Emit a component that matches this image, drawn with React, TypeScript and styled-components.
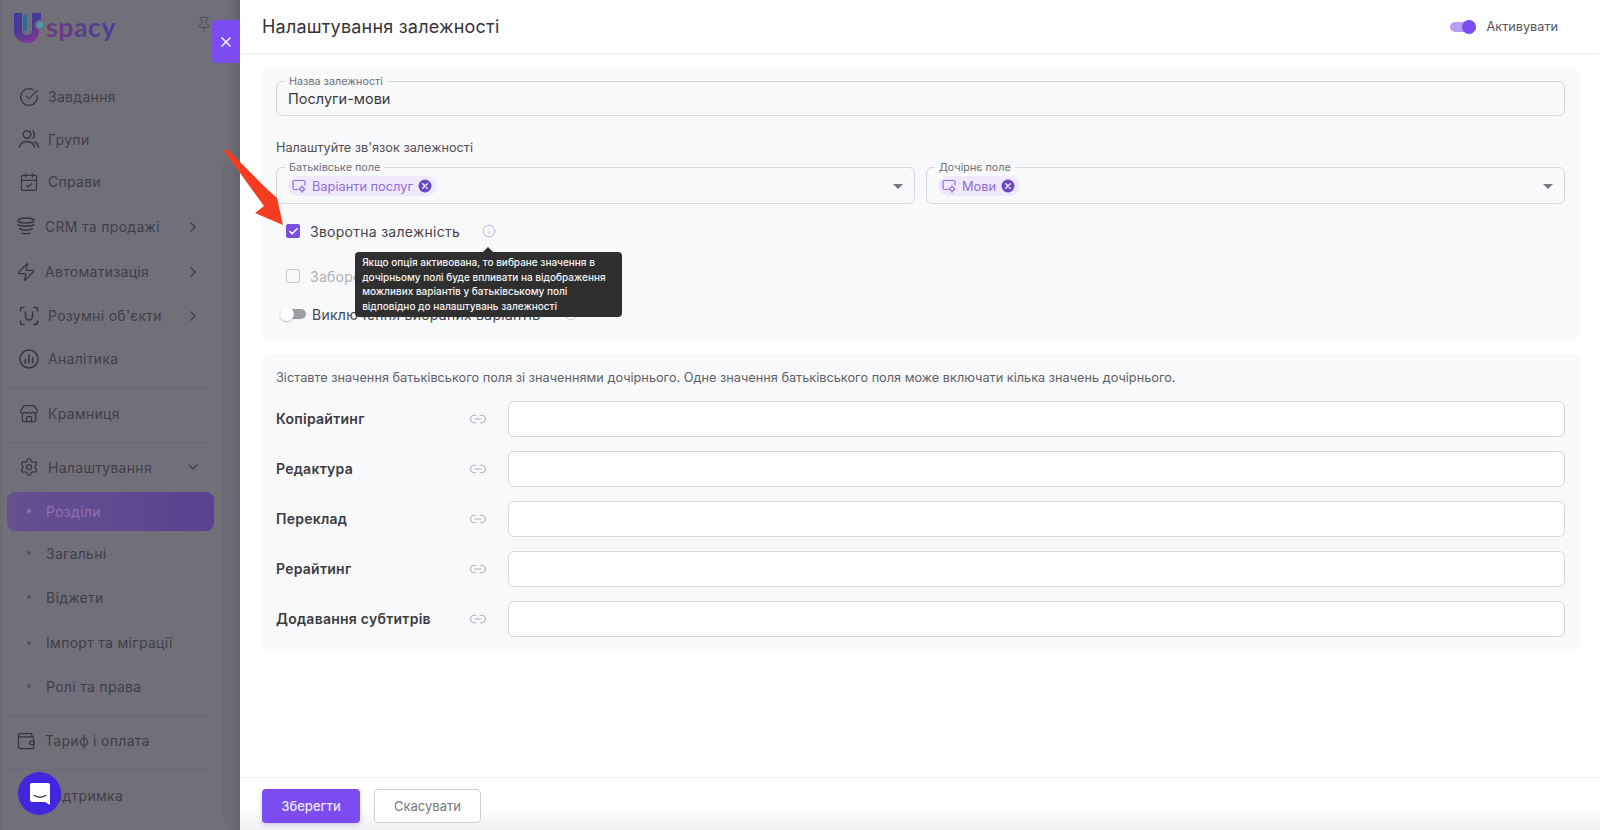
import React from 'react';
import styled, { createGlobalStyle } from 'styled-components';
import {
  CalendarCheck,
  Check,
  ChevronDown,
  ChevronRight,
  CircleCheckBig,
  Info,
  Link2,
  Pin,
  Settings,
  Store,
  Wallet,
  X,
  Zap,
} from 'lucide-react';

const GlobalStyle = createGlobalStyle`
  html, body {
    margin: 0;
    padding: 0;
    height: 100%;
    overflow: hidden;
    background: #fff;
    font-family: Inter, "Noto Sans", "Liberation Sans", sans-serif;
  }
  * { box-sizing: border-box; }
`;

const GroupsIcon = () => (
  <svg width='22' height='22' viewBox='0 0 22 22' fill='none' stroke='currentColor' strokeWidth='1.5' strokeLinecap='round'>
    <circle cx='9' cy='6.5' r='3.8' />
    <path d='M15 3c1.8 1 1.8 6 0 7' />
    <path d='M1.5 19c1-4 4-5.5 7.500-5.500s6.500 1.500 7.500 5.500' />
    <path d='M16.500 14c2 .5 3.300 2.500 4 5' />
  </svg>
);

const StackIcon = () => (
  <svg width='20' height='22' viewBox='0 0 20 22' fill='none' stroke='currentColor' strokeWidth='1.5' strokeLinecap='round'>
    <ellipse cx='10' cy='4.500' rx='8' ry='2.500' />
    <path d='M2 8.500c1.500 2.200 14.500 2.200 16 0' />
    <path d='M3.500 12.500c1.500 2 11.500 2 13 0' />
    <path d='M6 17c1 1 7 1 8 0' />
  </svg>
);

const ScanUIcon = () => (
  <svg width='20' height='20' viewBox='0 0 20 20' fill='none' stroke='currentColor' strokeWidth='1.5' strokeLinecap='round'>
    <path d='M5 1.500H3.500a2 2 0 0 0-2 2V5' />
    <path d='M15 1.500h1.500a2 2 0 0 1 2 2V5' />
    <path d='M5 18.500H3.500a2 2 0 0 1-2-2V15' />
    <path d='M15 18.500h1.500a2 2 0 0 0 2-2V15' />
    <path d='M6.500 6v4.500a3.500 3.500 0 0 0 7 0V6' />
  </svg>
);

const AnalyticsIcon = () => (
  <svg width='20' height='20' viewBox='0 0 20 20' fill='none' stroke='currentColor' strokeWidth='1.500' strokeLinecap='round'>
    <circle cx='10' cy='10' r='9' />
    <path d='M6.300 10.500v3.500M10 6v8M13.700 8.500v5.500' />
  </svg>
);

const SupportIcon = () => (
  <svg width='20' height='20' viewBox='0 0 20 20' fill='none' stroke='currentColor' strokeWidth='1.500' strokeLinecap='round'>
    <circle cx='10' cy='10' r='8.500' />
    <path d='M7.500 8a2.500 2.500 0 1 1 3.500 2.300c-.7.400-1 .9-1 1.700M10 14.500v.1' />
  </svg>
);

const FieldIcon = () => (
  <svg width='15' height='14' viewBox='0 0 15 14' fill='none' stroke='currentColor' strokeWidth='1.200' strokeLinecap='round'>
    <path d='M6 10.500H2.500a1.500 1.500 0 0 1-1.500-1.500V3a1.500 1.500 0 0 1 1.500-1.500h9A1.500 1.500 0 0 1 13 3v3' />
    <circle cx='10' cy='10' r='2' />
    <path d='M10 6.800v1M10 12.200v1M13.200 10h-1M7.800 10h-1' />
  </svg>
);

const RemoveIcon = () => (
  <svg width='14' height='14' viewBox='0 0 14 14'>
    <circle cx='7' cy='7' r='6.500' fill='#6a48c2' />
    <path d='M4.700 4.700l4.600 4.600M9.300 4.700l-4.600 4.600' stroke='#efe8fb' strokeWidth='1.500' strokeLinecap='round' />
  </svg>
);

const navItems = [
  { label: 'Завдання', icon: <CircleCheckBig size={20} strokeWidth={1.5} />, h: 42.5 },
  { label: 'Групи', icon: <GroupsIcon />, h: 42.5 },
  { label: 'Справи', icon: <CalendarCheck size={20} strokeWidth={1.5} />, h: 42.5 },
  { label: 'CRM та продажі', icon: <StackIcon />, h: 47, arrow: true, tight: true },
  { label: 'Автоматизація', icon: <Zap size={20} strokeWidth={1.5} />, h: 43, arrow: true, tight: true },
  { label: "Розумні об'єкти", icon: <ScanUIcon />, h: 45, arrow: true },
  { label: 'Аналітика', icon: <AnalyticsIcon />, h: 41 },
  { divider: true, gap: 7.5 },
  { label: 'Крамниця', icon: <Store size={20} strokeWidth={1.5} />, h: 52 },
  { divider: true, gap: 2 },
  { label: 'Налаштування', icon: <Settings size={20} strokeWidth={1.5} />, h: 49, open: true },
  { label: 'Розділи', sub: true, active: true, h: 39 },
  { label: 'Загальні', sub: true, h: 45 },
  { label: 'Віджети', sub: true, h: 43 },
  { label: 'Імпорт та міграції', sub: true, h: 48 },
  { label: 'Ролі та права', sub: true, h: 39 },
  { divider: true, gap: 9 },
  { label: 'Тариф і оплата', icon: <Wallet size={20} strokeWidth={1.5} />, h: 50, tight: true },
  { divider: true, gap: 3 },
  { label: 'Підтримка', icon: <SupportIcon />, h: 52 },
];

const mappings = ['Копірайтинг', 'Редактура', 'Переклад', 'Рерайтинг', 'Додавання субтитрів'];

const App = () => {
  return (
    <Page>
      <GlobalStyle />
      <Sidebar>
        <LogoRow>
          <svg width='30' height='30' viewBox='0 0 30 30'>
            <defs>
              <linearGradient id='logoU' x1='0' y1='0' x2='0.4' y2='1'>
                <stop offset='0' stopColor='#3b3a9a' />
                <stop offset='0.55' stopColor='#4a3a9c' />
                <stop offset='1' stopColor='#7a3590' />
              </linearGradient>
            </defs>
            <path d='M0 0h8v17c0 3 2 5 5 5s5-2 5-5V0h9v7h-2v11c0 7-5 12-12 12S0 25 0 18z' fill='url(#logoU)' />
            <path d='M9 2h4v16H9z' fill='#2d6a9e' />
            <circle cx='26' cy='12' r='5' fill='#71707a' />
            <circle cx='26' cy='12' r='3' fill='#45a3a6' />
          </svg>
          <LogoText>spacy</LogoText>
          <PinButton>
            <Pin size={16} strokeWidth={1.2} />
          </PinButton>
        </LogoRow>
        <NavList>
          {navItems.map((item, i) =>
            item.divider ? (
              <NavDivider key={i} $gap={item.gap ?? 0} />
            ) : item.sub ? (
              <SubItem key={i} $h={item.h ?? 40} $active={!!item.active}>
                <SubDot $active={!!item.active} />
                {item.label}
              </SubItem>
            ) : (
              <NavItem key={i} $h={item.h ?? 40} $tight={!!item.tight}>
                <NavIcon>{item.icon}</NavIcon>
                <NavLabel>{item.label}</NavLabel>
                {item.arrow && <ChevronRight size={16} strokeWidth={2} />}
                {item.open && <ChevronDown size={16} strokeWidth={2} />}
              </NavItem>
            ),
          )}
        </NavList>
        <ScrollThumb />
        <ChatButton>
          <svg width='22' height='24' viewBox='0 0 22 24'>
            <path d='M3 1h16a2 2 0 0 1 2 2v20l-5-3H3a2 2 0 0 1-2-2V3a2 2 0 0 1 2-2z' fill='#fff' />
            <path d='M5.500 13.500c3 2.200 8 2.200 11 0' stroke='#2a2440' strokeWidth='1.300' fill='none' strokeLinecap='round' />
          </svg>
        </ChatButton>
      </Sidebar>

      <Panel>
        <CloseTab>
          <X size={16} strokeWidth={2.5} />
        </CloseTab>
        <Header>
          <Title>Налаштування залежності</Title>
          <ActivateWrap>
            <Switch $on>
              <SwitchThumb $on />
            </Switch>
            <ActivateLabel>Активувати</ActivateLabel>
          </ActivateWrap>
        </Header>

        <Body>
          <Card $pad='13px 15px 0 14px' $h={272}>
            <Field $h={35}>
              <FloatLabel>Назва залежності</FloatLabel>
              <FieldValue>Послуги-мови</FieldValue>
            </Field>
            <SectionHint>Налаштуйте зв'язок залежності</SectionHint>
            <SelectRow>
              <Field $h={37}>
                <FloatLabel>Батьківське поле</FloatLabel>
                <Chip>
                  <FieldIcon />
                  Варіанти послуг
                  <RemoveIcon />
                </Chip>
                <Caret />
              </Field>
              <Field $h={37}>
                <FloatLabel>Дочірнє поле</FloatLabel>
                <Chip>
                  <FieldIcon />
                  Мови
                  <RemoveIcon />
                </Chip>
                <Caret />
              </Field>
            </SelectRow>
            <OptionRow $top={20}>
              <CheckBox $checked>
                <Check size={11} strokeWidth={3.5} color='#fff' />
              </CheckBox>
              <OptionText>Зворотна залежність</OptionText>
              <InfoWrap $left={22}>
                <Info size={14} strokeWidth={1.4} color='#b5a5e4' />
                <Tooltip>
                  Якщо опція активована, то вибране значення в дочірньому полі буде впливати на
                  відображення можливих варіантів у батьківському полі відповідно до налаштувань
                  залежності
                </Tooltip>
              </InfoWrap>
            </OptionRow>
            <OptionRow $top={31}>
              <CheckBox />
              <OptionText $muted>Заборонити вибір</OptionText>
            </OptionRow>
            <OptionRow $top={24} $shift={-6}>
              <Switch>
                <SwitchThumb />
              </Switch>
              <OptionText $tight>Виключення вибраних варіантів</OptionText>
              <InfoWrap $left={24}>
                <Info size={14} strokeWidth={1.4} color='#c4c4c8' />
              </InfoWrap>
            </OptionRow>
          </Card>

          <Card $pad='16px 15px 14px 14px' $top={14}>
            <MatchHint>
              Зіставте значення батьківського поля зі значеннями дочірнього. Одне значення
              батьківського поля може включати кілька значень дочірнього.
            </MatchHint>
            <MatchList>
              {mappings.map((name) => (
                <MatchRow key={name}>
                  <MatchName>{name}</MatchName>
                  <Link2 size={18} strokeWidth={1.6} color='#b0b2b8' />
                  <MatchInput />
                </MatchRow>
              ))}
            </MatchList>
          </Card>
        </Body>

        <Footer>
          <SaveButton>Зберегти</SaveButton>
          <CancelButton>Скасувати</CancelButton>
        </Footer>

        <PointerArrow width='62' height='80' viewBox='0 0 62 80'>
          <path d='M0 3 L3 1 L44 42 L53 50 L59 77 L31 65 L40 58 Z' fill='#f53c22' />
        </PointerArrow>
      </Panel>
    </Page>
  );
};

export default App;

const Page = styled.div`
  display: flex;
  width: 1600px;
  height: 830px;
  overflow: hidden;
`;

const Sidebar = styled.aside`
  position: relative;
  flex: 0 0 240px;
  height: 830px;
  background: linear-gradient(90deg, #6b6a74 0, #71707a 3px, #71707a 224px, #6c6b75 232px, #63626c 240px);
  color: #3f3e48;
  overflow: hidden;
`;

const LogoRow = styled.div`
  display: flex;
  align-items: center;
  height: 75.5px;
  padding: 0 0 20px 14px;
`;

const LogoText = styled.span`
  margin-left: 2px;
  padding-bottom: 1px;
  font-family: Lato, Inter, sans-serif;
  font-size: 27px;
  font-weight: 700;
  letter-spacing: 0.4px;
  line-height: 34px;
  background: linear-gradient(90deg, #6d3a80, #43409a);
  -webkit-background-clip: text;
  background-clip: text;
  color: transparent;
`;

const PinButton = styled.span`
  display: flex;
  margin: -8px 0 0 80px;
  color: #46454f;
`;

const NavList = styled.nav`
  display: flex;
  flex-direction: column;
`;

const NavItem = styled.div<{ $h: number; $tight: boolean }>`
  display: flex;
  align-items: center;
  height: ${(p) => p.$h}px;
  padding: 0 39px 0 ${(p) => (p.$tight ? 16 : 19)}px;
  font-size: 14px;
  letter-spacing: 0.3px;
  color: #3f3e48;

  svg {
    flex: none;
  }
`;

const NavIcon = styled.span`
  display: flex;
  justify-content: center;
  width: 20px;
  margin-right: 9px;
  color: #36353f;
`;

const NavLabel = styled.span`
  flex: 1;
  white-space: nowrap;
`;

const NavDivider = styled.div<{ $gap: number }>`
  height: 1px;
  margin: ${(p) => p.$gap}px 32px 0 8px;
  background: #6a6973;
`;

const SubItem = styled.div<{ $h: number; $active: boolean }>`
  display: flex;
  align-items: center;
  height: ${(p) => p.$h}px;
  margin: 0 26px 0 7px;
  padding-left: 20px;
  border-radius: 8px;
  font-size: 14px;
  letter-spacing: 0.3px;
  color: ${(p) => (p.$active ? '#8e72b4' : '#3f3e48')};
  background: ${(p) => (p.$active ? 'linear-gradient(90deg, #66508f, #5a4390)' : 'transparent')};
`;

const SubDot = styled.span<{ $active: boolean }>`
  width: 4px;
  height: 4px;
  margin-right: 15px;
  border-radius: 50%;
  background: ${(p) => (p.$active ? '#8e72b4' : '#55545e')};
`;

const ScrollThumb = styled.div`
  position: absolute;
  top: 165px;
  right: 11px;
  bottom: 12px;
  width: 7px;
  border-radius: 4px;
  background: #6b6a74;
`;

const ChatButton = styled.div`
  position: absolute;
  left: 18px;
  top: 772px;
  display: flex;
  align-items: center;
  justify-content: center;
  width: 43px;
  height: 43px;
  border-radius: 50%;
  background: #4126e0;
`;

const Panel = styled.main`
  position: relative;
  display: flex;
  flex-direction: column;
  flex: 1;
  height: 830px;
  background: #fff;
`;

const CloseTab = styled.div`
  position: absolute;
  top: 20px;
  left: -28px;
  display: flex;
  align-items: center;
  justify-content: center;
  width: 28px;
  height: 43px;
  border-radius: 4px 0 0 4px;
  background: #7b4df0;
  color: #f3eeff;
`;

const Header = styled.header`
  display: flex;
  align-items: center;
  justify-content: space-between;
  flex: none;
  height: 53px;
  padding: 0 42px 0 22px;
  box-shadow: 0 1px 3px rgba(30, 30, 50, 0.09);
`;

const Title = styled.h1`
  margin: 0;
  font-size: 18px;
  font-weight: 400;
  letter-spacing: 0.2px;
  color: #35353b;
`;

const ActivateWrap = styled.div`
  display: flex;
  align-items: center;
  gap: 11px;
`;

const ActivateLabel = styled.span`
  font-size: 12.7px;
  color: #55555c;
`;

const Switch = styled.span<{ $on?: boolean }>`
  position: relative;
  display: inline-block;
  flex: none;
  width: 26px;
  height: 10px;
  border-radius: 5px;
  background: ${(p) => (p.$on ? '#b7a0f3' : '#9d9da3')};
`;

const SwitchThumb = styled.span<{ $on?: boolean }>`
  position: absolute;
  top: -2px;
  left: ${(p) => (p.$on ? '12px' : '0')};
  width: 14px;
  height: 14px;
  border-radius: 50%;
  background: ${(p) => (p.$on ? '#7b4df0' : '#fff')};
  box-shadow: ${(p) => (p.$on ? 'none' : '0 1px 2px rgba(0, 0, 0, 0.25)')};
`;

const Body = styled.div`
  flex: 1;
  padding: 15px 20px 0 22px;
`;

const Card = styled.section<{ $pad: string; $h?: number; $top?: number }>`
  margin-top: ${(p) => p.$top ?? 0}px;
  height: ${(p) => (p.$h ? `${p.$h}px` : 'auto')};
  padding: ${(p) => p.$pad};
  border-radius: 8px;
  background: #f8f9fb;
`;

const Field = styled.div<{ $h: number }>`
  position: relative;
  display: flex;
  align-items: center;
  flex: 1;
  height: ${(p) => p.$h}px;
  padding: 1px 11px 0;
  border: 1px solid #d6d8dd;
  border-radius: 6px;
`;

const FloatLabel = styled.label`
  position: absolute;
  top: -6px;
  left: 8px;
  padding: 0 4px;
  font-size: 10.8px;
  line-height: 12px;
  color: #707076;
  background: #f8f9fb;
`;

const FieldValue = styled.span`
  margin-top: -1px;
  font-size: 14.500px;
  color: #38383e;
`;

const SectionHint = styled.p`
  margin: 23px 0 12px;
  padding-top: 1px;
  font-size: 12.7px;
  line-height: 15px;
  color: #505056;
`;

const SelectRow = styled.div`
  display: flex;
  gap: 11px;
`;

const Chip = styled.span`
  display: inline-flex;
  align-items: center;
  gap: 5px;
  height: 20px;
  padding: 0 5px 0 4px;
  border-radius: 10px;
  font-size: 12.8px;
  color: #8f6dd8;
  background: #f0e9fb;
`;

const Caret = styled.span`
  position: absolute;
  top: 16px;
  right: 11px;
  border-top: 5px solid #77777d;
  border-left: 5px solid transparent;
  border-right: 5px solid transparent;
`;

const OptionRow = styled.div<{ $top: number; $shift?: number }>`
  display: flex;
  align-items: center;
  height: 14px;
  margin: ${(p) => p.$top}px 0 0 ${(p) => 10 + (p.$shift ?? 0)}px;
`;

const CheckBox = styled.span<{ $checked?: boolean }>`
  display: flex;
  align-items: center;
  justify-content: center;
  flex: none;
  width: 14px;
  height: 14px;
  border-radius: 2px;
  border: 1px solid ${(p) => (p.$checked ? '#7a4fe0' : '#c9c9cd')};
  background: ${(p) => (p.$checked ? '#7a4fe0' : 'transparent')};
`;

const OptionText = styled.span<{ $muted?: boolean; $tight?: boolean }>`
  margin-left: ${(p) => (p.$tight ? 6 : 10)}px;
  font-size: 14px;
  letter-spacing: 0.27px;
  white-space: nowrap;
  color: ${(p) => (p.$muted ? '#b0b0b5' : '#45454b')};
`;

const InfoWrap = styled.span<{ $left: number }>`
  position: relative;
  display: flex;
  margin-left: ${(p) => p.$left}px;
`;

const Tooltip = styled.div`
  position: absolute;
  top: 28px;
  left: -127px;
  z-index: 2;
  width: 267px;
  height: 65px;
  padding: 3px 7px;
  border-radius: 4px;
  background: #2f2f30;
  color: #f4f4f4;
  font-size: 10px;
  font-weight: 500;
  line-height: 14.700px;

  &::before {
    content: '';
    position: absolute;
    top: -5px;
    left: 128px;
    border-bottom: 5px solid #2f2f30;
    border-left: 5px solid transparent;
    border-right: 5px solid transparent;
  }
`;

const MatchHint = styled.p`
  margin: 0 0 15px;
  font-size: 12.73px;
  line-height: 16px;
  color: #606066;
`;

const MatchList = styled.div`
  display: flex;
  flex-direction: column;
  gap: 14px;
`;

const MatchRow = styled.div`
  display: flex;
  align-items: center;
  height: 36px;
`;

const MatchName = styled.span`
  flex: 0 0 193px;
  padding-bottom: 2px;
  font-size: 14px;
  font-weight: 600;
  letter-spacing: 0.25px;
  color: #3c3c42;
`;

const MatchInput = styled.div`
  flex: 1;
  height: 36px;
  margin-left: 21px;
  border: 1px solid #d6d8dd;
  border-radius: 6px;
  background: #fff;
`;

const Footer = styled.footer`
  display: flex;
  align-items: flex-start;
  flex: none;
  gap: 14px;
  height: 53px;
  padding: 11px 0 0 22px;
  border-top: 1px solid #f3f3f5;
  background: linear-gradient(#fff 55%, #f1f1f2);
`;

const SaveButton = styled.button`
  width: 98px;
  height: 34px;
  border: none;
  border-radius: 4px;
  background: #7b4df0;
  color: #efe6ff;
  font-family: inherit;
  font-size: 13px;
  font-weight: 500;
  box-shadow: 0 2px 5px rgba(90, 60, 190, 0.25);
`;

const CancelButton = styled.button`
  width: 107px;
  height: 34px;
  border: 1px solid #cfcfd3;
  border-radius: 4px;
  background: #fff;
  color: #77777d;
  font-family: inherit;
  font-size: 13px;
`;

const PointerArrow = styled.svg`
  position: absolute;
  top: 148px;
  left: -16px;
  z-index: 3;
`;
